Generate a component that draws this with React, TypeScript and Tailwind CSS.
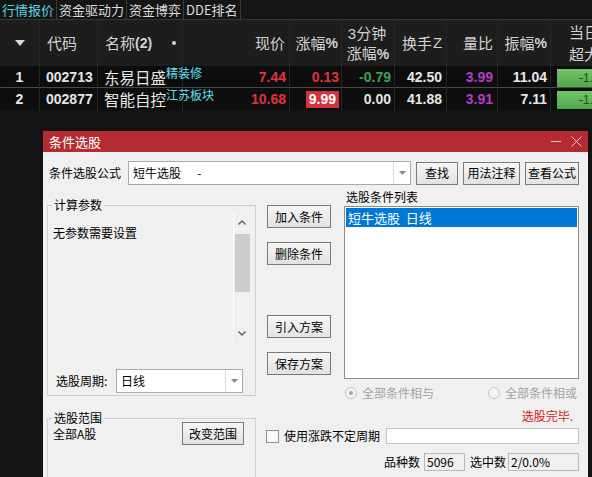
import React from 'react';

const cjk = "font-['Noto_Sans_CJK_SC','Noto_Sans',sans-serif]";
const num = "font-['Liberation_Sans','Noto_Sans_CJK_SC',sans-serif]";

const rows = [
    { n: '1', code: '002713', name: '东易日盛', tag: '精装修', price: '7.44', chg: '0.13', box: false, m3: '-0.79', m3c: 'text-[#3aa353]', turn: '42.50', vr: '3.99', amp: '11.04' },
    { n: '2', code: '002877', name: '智能自控', tag: '江苏板块', price: '10.68', chg: '9.99', box: true, m3: '0.00', m3c: 'text-[#e4e4e4]', turn: '41.88', vr: '3.91', amp: '7.11' },
];

const tabs = ['行情报价', '资金驱动力', '资金博弈', 'DDE排名'];

function Btn({ children, w }: { children: React.ReactNode; w: string }) {
    return (
        <div className={`${w} h-[23px] flex items-center justify-center border border-[#7a7a7a] bg-gradient-to-b from-[#f6f6f6] to-[#e2e2e2] text-[12px] leading-[14px] text-black`}>
            {children}
        </div>
    );
}

function Arrow() {
    return (
        <svg width="7" height="4" viewBox="0 0 7 4"><polygon points="0,0 7,0 3.5,4" fill="#8a8a8a" /></svg>
    );
}

function Combo({ w, text }: { w: string; text: string }) {
    return (
        <div className={`${w} h-[24px] flex bg-white border border-[#a9a9a9]`}>
            <div className="flex-1 pl-[4px] flex items-center text-[12px] text-black whitespace-pre">{text}</div>
            <div className="w-[17px] border-l border-[#dadada] flex items-center justify-center"><Arrow /></div>
        </div>
    );
}

function Radio({ on, label }: { on: boolean; label: string }) {
    return (
        <div className="flex items-center h-[16px]">
            <div className="w-[12px] h-[12px] rounded-full border border-[#c4c4c4] bg-[#f4f4f4] flex items-center justify-center">
                {on && <div className="w-[4px] h-[4px] rounded-full bg-[#a8a8a8]" />}
            </div>
            <span className="ml-[5px] text-[12px] text-[#a3a3a3]">{label}</span>
        </div>
    );
}

function Dialog() {
    return (
        <div className={`absolute left-[43px] top-[131px] w-[545px] h-[360px] bg-[#f0f0f0] ${cjk}`}>
            <div className="h-[21px] bg-[#b42c32] flex items-center pl-[6px] pr-[6px]">
                <span className="text-[13px] text-white">条件选股</span>
                <div className="ml-auto flex items-center gap-[10px]">
                    <div className="w-[10px] h-[1px] bg-[#f0c8ca]" />
                    <svg width="11" height="11" viewBox="0 0 11 11"><path d="M0.5 0.5 L10.5 10.5 M10.5 0.5 L0.5 10.5" stroke="#f0c8ca" strokeWidth="1" /></svg>
                </div>
            </div>

            <div className="pt-[9px] pl-[6px] flex items-center h-[33px]">
                <span className="w-[79px] text-[12px] text-black">条件选股公式</span>
                <Combo w="w-[283px]" text="短牛选股      -" />
                <div className="ml-[5px]"><Btn w="w-[42px]">查找</Btn></div>
                <div className="ml-[5px]"><Btn w="w-[57px]">用法注释</Btn></div>
                <div className="ml-[5px]"><Btn w="w-[54px]">查看公式</Btn></div>
            </div>

            <div className="flex pl-[4px]">
                <div className="w-[209px] flex flex-col">
                    <fieldset className="mt-[13px] border border-[#cfcfcf] px-0 pb-[2px]">
                        <legend className="ml-[4px] px-[2px] text-[12px] leading-[14px] text-black">计算参数</legend>
                        <div className="h-[130px] flex">
                            <div className="flex-1 pl-[5px] pt-[12px] text-[12px] text-black">无参数需要设置</div>
                            <div className="w-[17px] mr-[5px] border-l border-white flex flex-col items-center">
                                <div className="h-[20px] flex items-center justify-center">
                                    <svg width="8" height="5" viewBox="0 0 8 5"><path d="M0.5 4.5 L4 1 L7.5 4.5" fill="none" stroke="#606060" strokeWidth="1.4" /></svg>
                                </div>
                                <div className="mt-[2px] w-[15px] h-[58px] bg-[#cdcdcd]" />
                                <div className="mt-auto h-[17px] flex items-center justify-center">
                                    <svg width="8" height="5" viewBox="0 0 8 5"><path d="M0.5 0.5 L4 4 L7.5 0.5" fill="none" stroke="#606060" strokeWidth="1.4" /></svg>
                                </div>
                            </div>
                        </div>
                        <div className="mt-[27px] flex items-center pl-[8px]">
                            <span className="w-[60px] text-[12px] text-black">选股周期:</span>
                            <Combo w="w-[127px]" text="日线" />
                        </div>
                    </fieldset>
                    <fieldset className="mt-[15px] border border-[#cfcfcf] h-[80px]">
                        <legend className="ml-[4px] px-[2px] text-[12px] leading-[14px] text-black">选股范围</legend>
                        <div className="-mt-[3px] h-[23px] flex items-center justify-between pl-[5px] pr-[11px]">
                            <span className="text-[12px] leading-[14px] text-black">全部A股</span>
                            <Btn w="w-[62px]">改变范围</Btn>
                        </div>
                    </fieldset>
                </div>

                <div className="ml-[10px] w-[313px] flex flex-col">
                    <div className="flex">
                        <div className="ml-[1px] w-[64px] flex flex-col">
                            <div className="mt-[20px]"><Btn w="w-[64px]">加入条件</Btn></div>
                            <div className="mt-[14px]"><Btn w="w-[64px]">删除条件</Btn></div>
                            <div className="mt-[50px]"><Btn w="w-[64px]">引入方案</Btn></div>
                            <div className="mt-[14px]"><Btn w="w-[64px]">保存方案</Btn></div>
                        </div>
                        <div className="ml-[13px] w-[235px] flex flex-col">
                            <div className="mt-[5px] h-[14px] leading-[14px] text-[12px] text-black pl-[2px]">选股条件列表</div>
                            <div className="mt-[2px] h-[173px] bg-white border border-[#8c8c8c] p-[1px]">
                                <div className="h-[19px] bg-[#0078d7] text-white text-[13px] leading-[19px] pl-[2px] whitespace-pre">短牛选股  日线</div>
                            </div>
                            <div className="mt-[6px] flex pl-[1px] pr-[2px]">
                                <Radio on label="全部条件相与" />
                                <div className="ml-auto"><Radio on={false} label="全部条件相或" /></div>
                            </div>
                        </div>
                    </div>
                    <div className="mt-[8px] h-[14px] leading-[14px] text-right pr-[6px] text-[12px] text-[#d42020]">选股完毕.</div>
                    <div className="mt-[5px] h-[16px] flex items-center">
                        <div className="w-[13px] h-[13px] border border-[#8f8f8f] bg-[#fafafa]" />
                        <span className="ml-[5px] text-[12px] text-black">使用涨跌不定周期</span>
                        <div className="ml-auto w-[193px] h-[16px] bg-white border border-[#c2c2c2]" />
                    </div>
                    <div className="mt-[9px] h-[18px] flex items-center justify-end text-[12px] text-black">
                        <span>品种数</span>
                        <div className="ml-[4px] w-[41px] h-[18px] border border-[#b9b9b9] pl-[2px] leading-[16px]">5096</div>
                        <span className="ml-[5px]">选中数</span>
                        <div className="ml-[2px] w-[71px] h-[18px] border border-[#b9b9b9] pl-[2px] leading-[16px]">2/0.0%</div>
                    </div>
                </div>
            </div>
        </div>
    );
}

const grid = 'grid grid-cols-[40px_58px_85px_107px_52px_53px_52px_51px_53px_41px]';
const cell = 'border-r border-[#262626]';

export default function App() {
    return (
        <div className={`relative w-[592px] h-[477px] overflow-hidden bg-[#131313] ${cjk}`}>
            <div className="h-[19px] flex bg-[#151515]">
                {tabs.map((t, i) => (
                    <div key={t} className={`h-full flex items-center px-[2px] border-r border-[#3a3a3a] text-[13px] ${i === 0 ? 'text-[#56d4e6]' : 'text-[#dcdcdc]'}`}>
                        {t}
                    </div>
                ))}
            </div>

            <div className={`${grid} h-[47px] bg-[#1d1d1d] border-t border-[#353535] text-[15px] text-[#d2d2d2]`}>
                <div className={`${cell} flex items-center justify-center`}>
                    <svg width="10" height="6" viewBox="0 0 10 6"><polygon points="0,0 10,0 5,6" fill="#d8d8d8" /></svg>
                </div>
                <div className={`${cell} flex items-center pl-[7px]`}>代码</div>
                <div className={`${cell} flex items-center pl-[7px]`}>
                    <span>名称</span><span className={`${num} font-bold text-[14px]`}>(2)</span>
                    <span className="ml-auto mr-[6px] w-[4px] h-[4px] rounded-full bg-[#d2d2d2]" />
                </div>
                <div className={`${cell} flex items-center justify-end pr-[4px]`}>现价</div>
                <div className={`${cell} flex items-center justify-end pr-[3px]`}>涨幅<span className={`${num} font-bold text-[14px]`}>%</span></div>
                <div className={`${cell} flex flex-col items-center justify-center leading-[19px]`}>
                    <span className="pr-[2px]"><span className={`${num} text-[15px]`}>3</span>分钟</span>
                    <span>涨幅<span className={`${num} font-bold text-[14px]`}>%</span></span>
                </div>
                <div className={`${cell} flex items-center justify-center pl-[3px]`}>换手<span className={`${num} text-[15px] ml-[1px]`}>Z</span></div>
                <div className={`${cell} flex items-center justify-end pr-[4px]`}>量比</div>
                <div className={`${cell} flex items-center justify-end pr-[3px]`}>振幅<span className={`${num} font-bold text-[14px]`}>%</span></div>
                <div className="flex flex-col justify-center pl-[18px] leading-[22px] whitespace-nowrap overflow-hidden">
                    <span>当日</span><span>超大</span>
                </div>
            </div>

            <div className="bg-[#0d0d0d]">
                {rows.map((r, i) => (
                    <div key={r.code} className={`${grid} h-[22px] ${i === 0 ? 'border-b border-[#4a4a4a]' : ''} ${num} font-bold text-[14px] text-[#e6e6e6]`}>
                        <div className={`${cell} flex items-center justify-center`}>{r.n}</div>
                        <div className={`${cell} flex items-center pl-[6px]`}>{r.code}</div>
                        <div className={`${cell} relative flex items-center pl-[6px] overflow-visible z-10`}>
                            <span className={`${cjk} font-normal text-[15.5px] text-[#e8e8e8] whitespace-nowrap`}>{r.name}</span>
                            <span className={`${cjk} font-normal self-start text-[12px] leading-[13px] text-[#5fe0ec] whitespace-nowrap`}>{r.tag}</span>
                        </div>
                        <div className={`${cell} flex items-center justify-end pr-[3px] text-[#e1323d]`}>{r.price}</div>
                        <div className={`${cell} flex items-center justify-end pr-[2px]`}>
                            {r.box
                                ? <span className="h-[17px] px-[3px] flex items-center bg-[#d3313c] text-white">{r.chg}</span>
                                : <span className="text-[#e1323d]">{r.chg}</span>}
                        </div>
                        <div className={`${cell} flex items-center justify-end pr-[3px] ${r.m3c}`}>{r.m3}</div>
                        <div className={`${cell} flex items-center justify-end pr-[4px]`}>{r.turn}</div>
                        <div className={`${cell} flex items-center justify-end pr-[4px] text-[#b33cc6]`}>{r.vr}</div>
                        <div className={`${cell} flex items-center justify-end pr-[3px]`}>{r.amp}</div>
                        <div className="flex items-center pl-[6px]">
                            <div className="w-full h-[18px] bg-gradient-to-b from-[#74c46a] to-[#4ea84a] flex items-center pl-[22px] font-normal text-[12px] text-[#1f4d1c] overflow-hidden">-1.</div>
                        </div>
                    </div>
                ))}
            </div>

            <Dialog />
        </div>
    );
}
